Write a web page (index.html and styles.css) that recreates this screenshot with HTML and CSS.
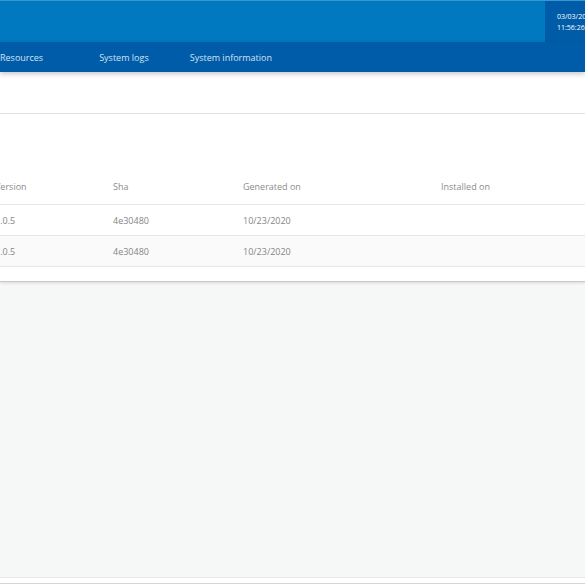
FILE: index.html
```html
<!DOCTYPE html>
<html>
<head>
<meta charset="utf-8">
<link rel="stylesheet" href="styles.css">
</head>
<body>
<div class="page">
  <header class="topbar">
    <div class="brand"></div>
    <div class="clock">
      <div>03/03/2021</div>
      <div>11:56:26</div>
    </div>
  </header>
  <nav class="nav">
    <a class="nav-item first">Resources</a>
    <a class="nav-item">System logs</a>
    <a class="nav-item">System information</a>
  </nav>
  <section class="panel">
    <div class="panel-head"></div>
    <div class="panel-body">
      <div class="table">
        <div class="row head">
          <div class="cell">Version</div>
          <div class="cell">Sha</div>
          <div class="cell">Generated on</div>
          <div class="cell">Installed on</div>
        </div>
        <div class="row">
          <div class="cell">1.0.5</div>
          <div class="cell">4e30480</div>
          <div class="cell">10/23/2020</div>
          <div class="cell"></div>
        </div>
        <div class="row alt">
          <div class="cell">1.0.5</div>
          <div class="cell">4e30480</div>
          <div class="cell">10/23/2020</div>
          <div class="cell"></div>
        </div>
      </div>
    </div>
  </section>
  <main class="canvas"></main>
  <footer class="footer"></footer>
</div>
</body>
</html>
```
FILE: styles.css
```css
html, body {
  margin: 0;
  padding: 0;
}
body {
  background: #ffffff;
  font-family: "Open Sans", "Noto Sans", sans-serif;
  overflow: hidden;
}
.page {
  display: flex;
  flex-direction: column;
  height: 585px;
}
.topbar {
  height: 42px;
  background: #0079c1;
  border-top: 1px solid #3d97cf;
  box-sizing: border-box;
  display: flex;
}
.brand {
  flex: 1;
}
.clock {
  width: 28px;
  flex: none;
  background: #005ca8;
  color: #ffffff;
  font-size: 7px;
  line-height: 11px;
  padding: 10px 0 0 12px;
  white-space: nowrap;
  overflow: hidden;
}
.nav {
  height: 30px;
  background: #005ca9;
  display: flex;
  align-items: center;
  box-shadow: 0 2px 5px rgba(0, 0, 0, 0.22);
  position: relative;
  z-index: 1;
}
.nav-item {
  color: #d2e3f2;
  font-size: 9px;
  margin-right: 41px;
  white-space: nowrap;
}
.nav-item.first {
  margin-left: 0;
  margin-right: 56px;
}
.panel {
  background: #ffffff;
  border-bottom: 1px solid #c9c9c9;
  box-shadow: 0 1px 3px rgba(0, 0, 0, 0.12);
  position: relative;
}
.panel-head {
  height: 41px;
  border-bottom: 1px solid #e2e2e2;
}
.panel-body {
  padding-top: 54px;
  padding-bottom: 14px;
}
.table {
  margin-left: -5px;
  font-size: 9px;
  color: #858585;
}
.row {
  display: grid;
  grid-template-columns: 118px 130px 198px 1fr;
  height: 30px;
  align-items: center;
  border-bottom: 1px solid #e6e6e6;
}
.row.head {
  height: 36px;
  color: #8c8c8c;
}
.row.alt {
  background: #fafafa;
}
.canvas {
  flex: 1;
  background: #f6f8f7;
  border-bottom: 1px solid #e8e8e8;
}
.footer {
  height: 5px;
  background: #ffffff;
  border-bottom: 1px solid #d6d6d6;
  margin-bottom: 1px;
}
```
